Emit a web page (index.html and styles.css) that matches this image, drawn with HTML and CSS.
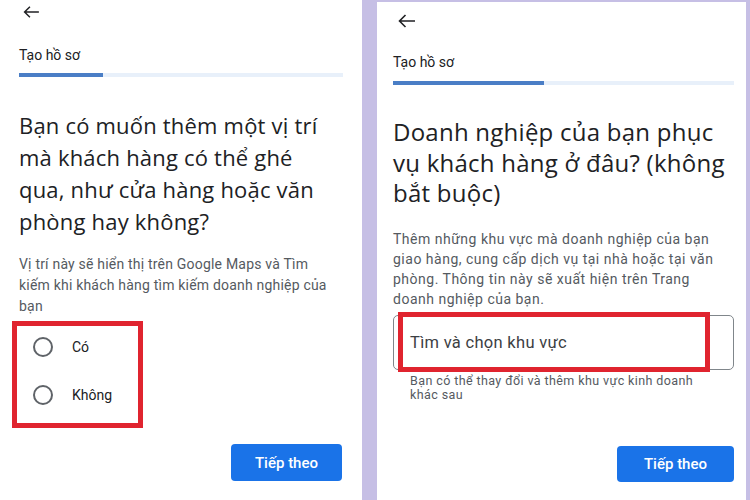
FILE: index.html
```html
<!DOCTYPE html>
<html lang="vi">
<head>
<meta charset="utf-8">
<link rel="stylesheet" href="styles.css">
</head>
<body>
<div class="page">
  <section class="panel panel-left">
    <div class="top-row">
      <svg class="back back-left" viewBox="0 0 18 13" width="17" height="12"><path d="M17 6.5H1.8M7.3 0.8L1.5 6.5l5.8 5.7" fill="none" stroke="#202124" stroke-width="1.6"/></svg>
    </div>
    <div class="step-title">Tạo hồ sơ</div>
    <div class="progress"><div class="progress-fill fill-left"></div></div>
    <h1 class="heading heading-left">Bạn có muốn thêm một vị trí mà khách hàng có thể ghé qua, như cửa hàng hoặc văn phòng hay không?</h1>
    <p class="desc desc-left">Vị trí này sẽ hiển thị trên Google Maps và Tìm kiếm khi khách hàng tìm kiếm doanh nghiệp của bạn</p>
    <div class="radio-group">
      <label class="radio-row"><span class="radio"></span><span>Có</span></label>
      <label class="radio-row"><span class="radio"></span><span>Không</span></label>
    </div>
    <div class="actions"><button class="btn btn-left">Tiếp theo</button></div>
  </section>
  <section class="panel panel-right">
    <div class="top-row top-row-right">
      <svg class="back back-right" viewBox="0 0 18 14" width="18" height="14"><path d="M17 7H1.8M7.5 1L1.5 7l6 6" fill="none" stroke="#202124" stroke-width="1.6"/></svg>
    </div>
    <div class="step-title step-title-right">Tạo hồ sơ</div>
    <div class="progress progress-right"><div class="progress-fill fill-right"></div></div>
    <h1 class="heading heading-right">Doanh nghiệp của bạn phục vụ khách hàng ở đâu? (không bắt buộc)</h1>
    <p class="desc desc-right">Thêm những khu vực mà doanh nghiệp của bạn giao hàng, cung cấp dịch vụ tại nhà hoặc tại văn phòng. Thông tin này sẽ xuất hiện trên Trang doanh nghiệp của bạn.</p>
    <div class="field">
      <div class="input">Tìm và chọn khu vực</div>
      <div class="highlight"></div>
    </div>
    <p class="helper">Bạn có thể thay đổi và thêm khu vực kinh doanh khác sau</p>
    <div class="actions actions-right"><button class="btn btn-right">Tiếp theo</button></div>
  </section>
</div>
</body>
</html>
```
FILE: styles.css
```css
* { box-sizing: border-box; }
html, body { margin: 0; padding: 0; }
body {
  font-family: Roboto, "Liberation Sans", sans-serif;
  color: #202124;
  width: 750px;
  height: 500px;
  overflow: hidden;
}
.page {
  display: flex;
  width: 750px;
  height: 500px;
  background: #c6bfe5;
}
.panel {
  background: #fff;
  display: flex;
  flex-direction: column;
}
.panel-left {
  width: 362px;
  padding: 0 19px;
}
.panel-right {
  width: 369px;
  margin-left: 15px;
  margin-top: 2px;
  padding: 0 12px 0 16px;
}
.top-row { height: 24px; }
.top-row-right { height: 28px; }
.back { display: block; }
.back-left { margin: 6px 0 0 4px; }
.back-right { margin: 12px 0 0 5px; }

.step-title {
  font-size: 14px;
  line-height: 20px;
  margin-top: 21px;
  color: #202124;
}
.step-title-right { margin-top: 22px; }

.progress {
  height: 4px;
  margin-top: 8px;
  background: #e8f0fa;
}
.progress-right { margin-top: 9px; }
.progress-fill { height: 100%; background: #4a7ec6; }
.fill-left { width: 84px; }
.fill-right { width: 151px; }

.heading {
  margin: 0;
  font-family: "Open Sans", Roboto, sans-serif;
  font-weight: 400;
  color: #202124;
}
.heading-left {
  font-size: 22px;
  letter-spacing: 0.2px;
  line-height: 32px;
  margin-top: 32px;
}
.heading-right {
  font-size: 24px;
  letter-spacing: 0.25px;
  line-height: 30.5px;
  margin-top: 32px;
}
.desc {
  margin: 0;
  color: #555a5f;
}
.desc-left {
  font-size: 14px;
  letter-spacing: 0.2px;
  line-height: 21px;
  margin-top: 17px;
  max-width: 316px;
}
.desc-right {
  font-size: 14px;
  letter-spacing: 0.5px;
  line-height: 20px;
  margin-top: 20px;
  max-width: 327px;
}

.radio-group {
  margin: 4px 0 0 -7px;
  width: 131px;
  height: 107px;
  border: 5px solid #e0242f;
  padding: 0 0 7px 16px;
  display: flex;
  flex-direction: column;
  gap: 6px;
}
.radio-row {
  height: 42px;
  display: flex;
  align-items: center;
  gap: 19px;
  font-size: 14px;
  color: #202124;
}
.radio {
  width: 20px;
  height: 20px;
  border: 2px solid #5f6368;
  border-radius: 50%;
  flex: none;
}

.actions {
  display: flex;
  justify-content: flex-end;
  margin-top: 16px;
}
.btn {
  background: #1a73e8;
  color: #fff;
  border: 0;
  border-radius: 4px;
  font-family: Roboto, sans-serif;
  font-weight: 500;
  font-size: 15px;
  padding: 0;
}
.btn-left { width: 111px; height: 37px; margin-right: 1px; }
.btn-right { width: 117px; height: 36px; }

.field {
  position: relative;
  margin-top: 6px;
}
.input {
  height: 55px;
  border: 1px solid #80868b;
  border-radius: 5px;
  padding-left: 16px;
  display: flex;
  align-items: center;
  font-size: 16.5px;
  letter-spacing: 0.3px;
  color: #3c4043;
}
.highlight {
  position: absolute;
  left: 5px;
  top: -3px;
  width: 312px;
  height: 60px;
  border: 5px solid #e0242f;
}
.helper {
  margin: 4px 0 0 17px;
  font-size: 12.5px;
  letter-spacing: 0.4px;
  line-height: 14px;
  color: #555a5f;
  max-width: 300px;
}
.actions-right { margin-top: 44px; }
```
